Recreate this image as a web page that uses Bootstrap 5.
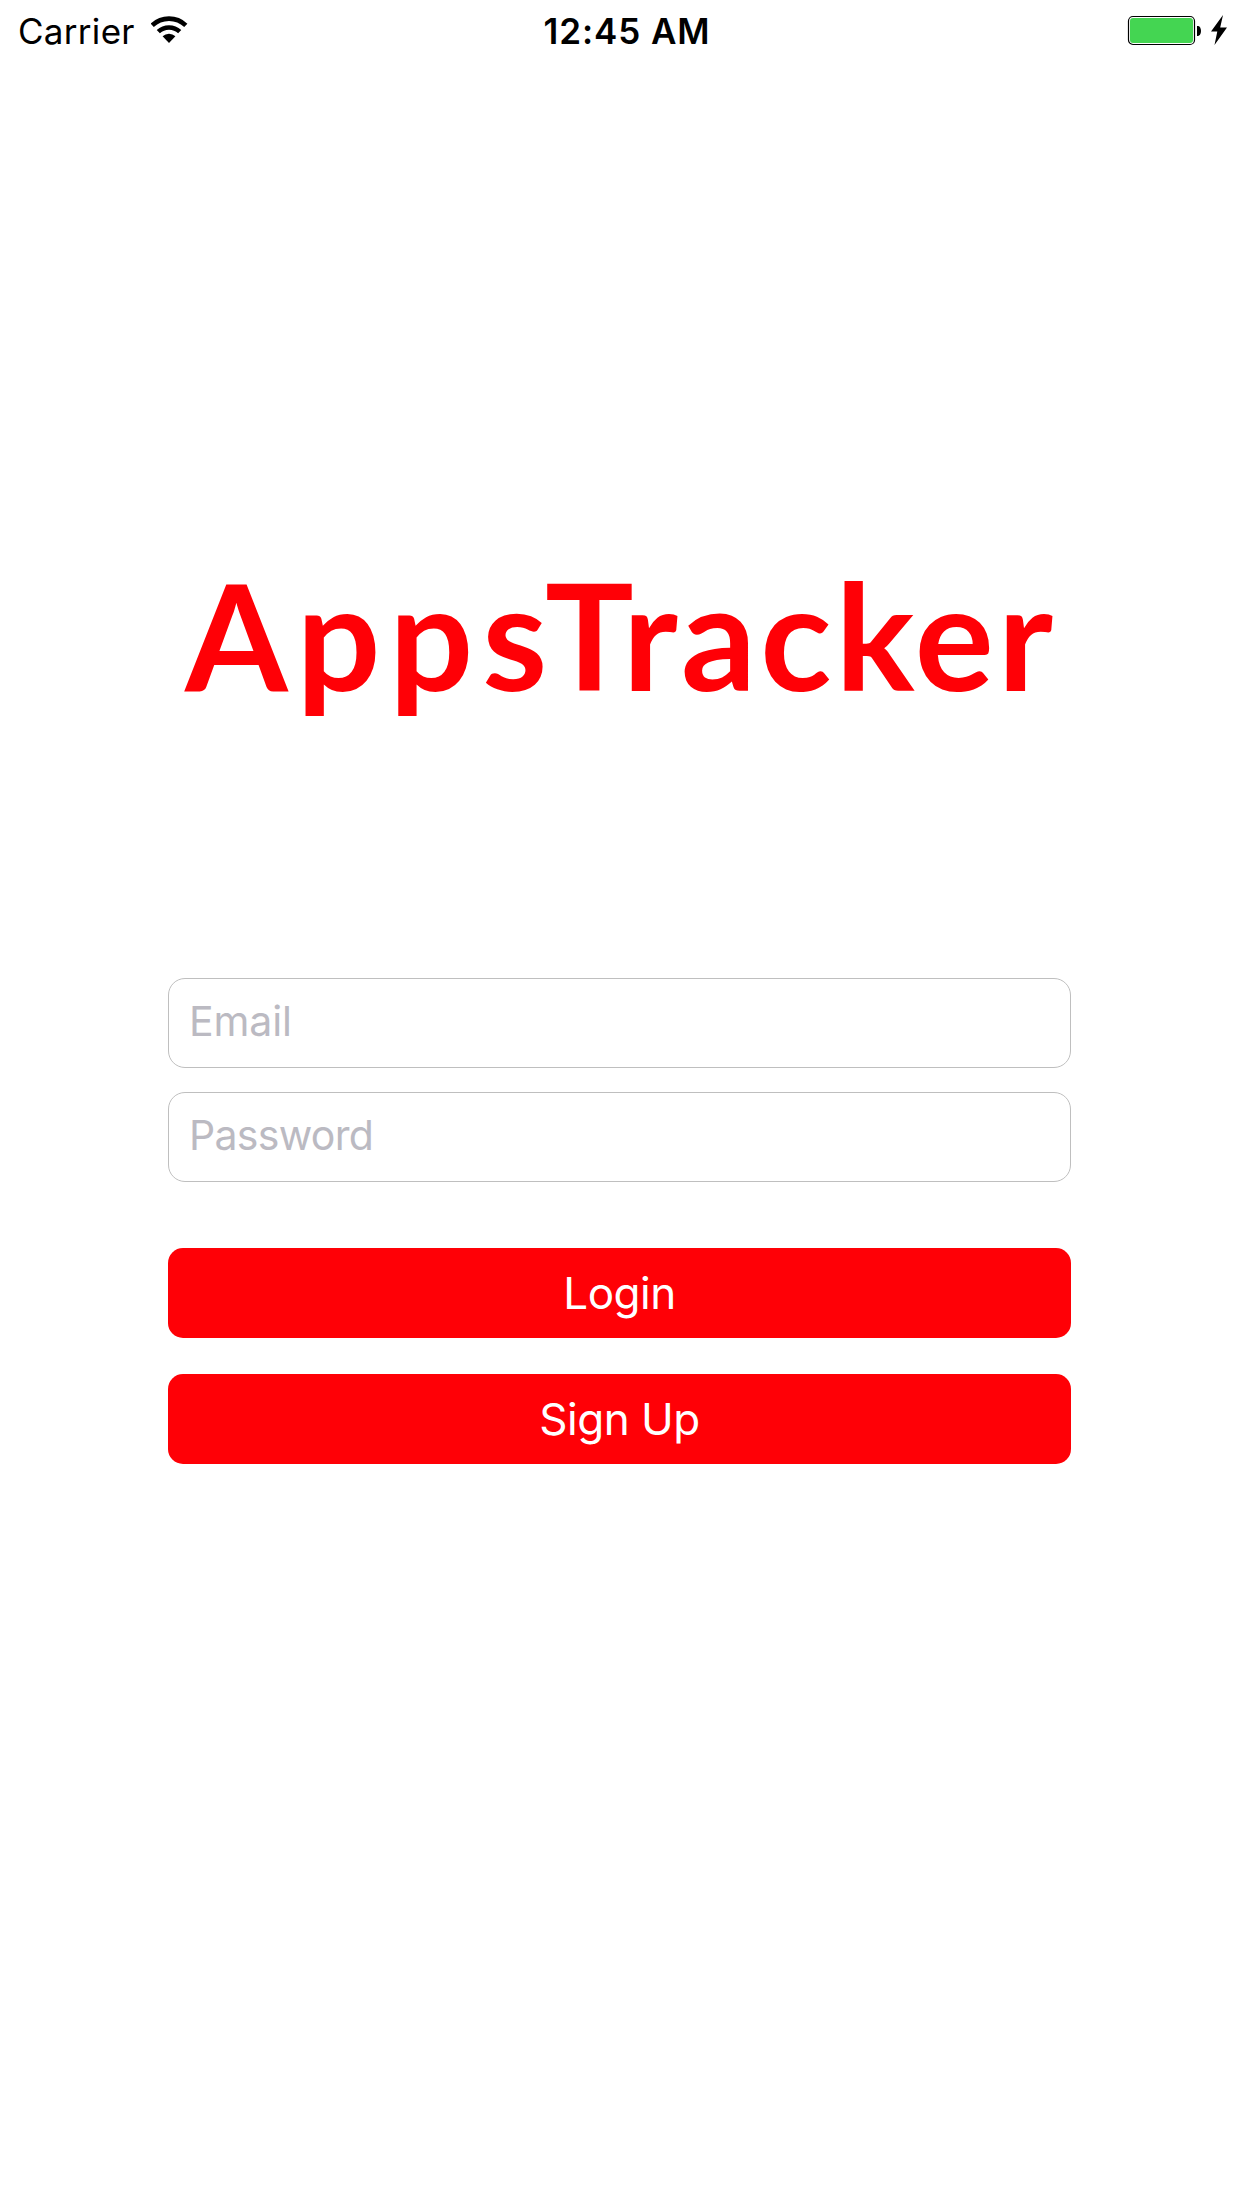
<!DOCTYPE html>
<html lang="en">
<head>
<meta charset="utf-8">
<meta name="viewport" content="width=device-width, initial-scale=1">
<title>AppsTracker</title>
<link href="https://cdn.jsdelivr.net/npm/bootstrap@5.3.0/dist/css/bootstrap.min.css" rel="stylesheet">
<style>
body { font-family: Inter, "Liberation Sans", sans-serif; color: #000; background: #fff; }
.status-bar { height: 62px; padding: 0 14px 0 18px; font-size: 35px; line-height: 62px; }
.carrier-name { letter-spacing: 0.3px; }
.clock { font-weight: 600; letter-spacing: 0.9px; padding-left: 8px; }
.brand { margin: 472px 0 0; height: 200px; line-height: 200px; font-family: Lato, sans-serif; font-weight: 700; font-size: 148px; color: #ff0006; letter-spacing: 4px; white-space: nowrap; }
.brand-first { letter-spacing: 8.8px; margin-right: -11px; }
.login-form { width: 903px; margin: 244px 0 0 168px; }
.login-form .form-control { height: 90px; padding: 0 20px 4px; font-size: 41px; line-height: 86px; border: 1px solid #bfbfbf; border-radius: 17px; letter-spacing: -0.7px; }
.login-form .form-control[type="email"] { letter-spacing: -0.1px; }
.login-form .form-control::placeholder { color: #bbbac2; opacity: 1; }
.login-form .btn { height: 90px; padding: 0; border: 0; border-radius: 15px; font-size: 44px; line-height: 90px; letter-spacing: -0.5px; --bs-btn-bg: #ff0006; --bs-btn-color: #fff; --bs-btn-hover-bg: #e00005; --bs-btn-hover-color: #fff; }
.form-actions { margin-top: 66px; gap: 36px; }
</style>
</head>
<body>
<header class="status-bar row gx-0 align-items-start">
  <div class="col d-flex">
    <span class="carrier-name">Carrier</span>
    <svg class="ms-3" width="38" height="62" viewBox="0 0 38 62" fill="none" stroke="#000" stroke-width="4.6" aria-hidden="true">
      <path d="M1.2 25.3A24.4 24.4 0 0 1 34.8 25.3M7.3 31.7A15.6 15.6 0 0 1 28.7 31.7"/>
      <path d="M11.6 36.3A9.2 9.2 0 0 1 24.4 36.3L18 43Z" fill="#000" stroke="none"/>
    </svg>
  </div>
  <div class="col-auto clock">12:45 AM</div>
  <div class="col d-flex justify-content-end">
    <svg width="101" height="62" viewBox="0 0 101 62" aria-hidden="true">
      <rect x="1.5" y="16.5" width="66" height="28" rx="4.5" fill="#fff" stroke="#000" stroke-width="1.2"/>
      <rect x="3" y="18" width="63" height="25" rx="3" fill="#44d552"/>
      <path d="M70 26h1a3 5 0 0 1 0 10h-1Z"/>
      <path d="M96 15 84 31.5h6.3L87.5 45 100 27.5h-6.8Z"/>
    </svg>
  </div>
</header>
<main>
  <h1 class="brand text-center"><span class="brand-first">Apps</span>Tracker</h1>
  <form class="login-form d-flex flex-column">
    <input type="email" class="form-control" placeholder="Email" aria-label="Email">
    <input type="password" class="form-control mt-4" placeholder="Password" aria-label="Password">
    <div class="form-actions d-flex flex-column">
      <button type="button" class="btn btn-danger">Login</button>
      <button type="button" class="btn btn-danger">Sign Up</button>
    </div>
  </form>
</main>
<script src="https://cdn.jsdelivr.net/npm/bootstrap@5.3.0/dist/js/bootstrap.bundle.min.js"></script>
</body>
</html>
